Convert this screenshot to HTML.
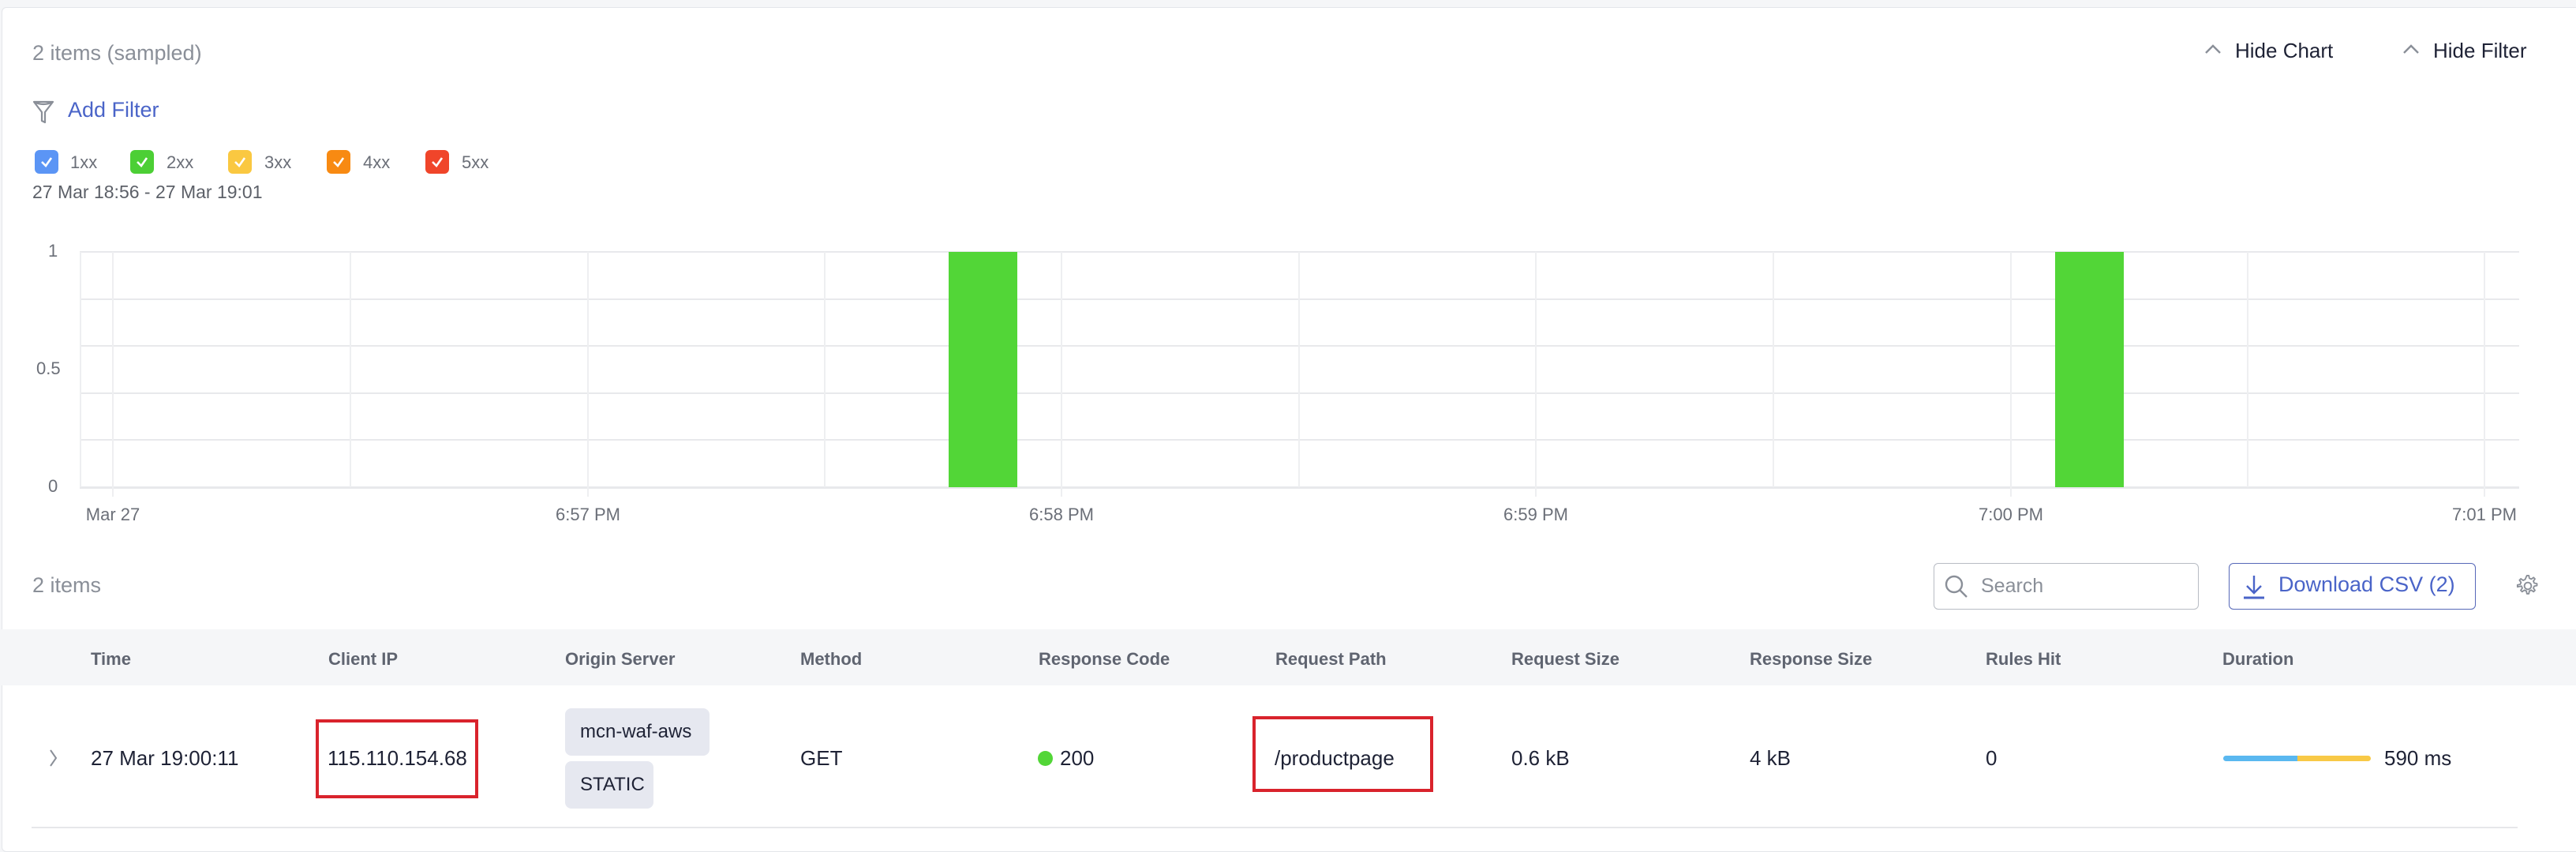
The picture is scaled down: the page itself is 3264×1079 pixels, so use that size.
<!DOCTYPE html>
<html><head><meta charset="utf-8"><style>
*{margin:0;padding:0;box-sizing:border-box}
body{width:3264px;height:1066px;background:#f5f6f8;font-family:"Liberation Sans",sans-serif;position:relative;overflow:hidden}
.card{position:absolute;left:2px;top:9px;width:3270px;height:1070px;background:#fff;border:1px solid #e4e6ea;border-radius:6px}
.a{position:absolute;white-space:nowrap}
.g{color:#8a8f98}
.t{color:#1e2235;font-size:26px}
.h{color:#5f6470;font-size:22px;font-weight:bold;top:822px}
.cb{position:absolute;top:190px;width:30px;height:30px;border-radius:6px}
.cb svg{position:absolute;left:6px;top:7px}
.cl{position:absolute;top:193px;font-size:22px;color:#6b6f78}
.hl{position:absolute;left:101px;width:3091px;height:2px;background:#e8e9ec}
.vl{position:absolute;top:319px;height:310px;width:2px;background:#eeeff1}
.xl{position:absolute;top:639px;font-size:22px;color:#6b6f78;transform:translateX(-50%)}
.tag{position:absolute;left:716px;background:#e6e8f0;border-radius:8px;font-size:24px;color:#1e2235;padding-left:19px;line-height:60px}
.red{position:absolute;border:4px solid #d9232c}
</style></head><body>
<div class="card"></div>
<div class="a g" style="left:41px;top:52px;font-size:27px">2 items (sampled)</div>
<svg class="a" style="left:2793px;top:55px" width="22" height="14"><path d="M2 12 L11 3 L20 12" stroke="#8a8f98" stroke-width="2.4" fill="none"/></svg>
<div class="a t" style="left:2832px;top:49px">Hide Chart</div>
<svg class="a" style="left:3044px;top:55px" width="22" height="14"><path d="M2 12 L11 3 L20 12" stroke="#8a8f98" stroke-width="2.4" fill="none"/></svg>
<div class="a t" style="left:3083px;top:49px">Hide Filter</div>
<svg class="a" style="left:40px;top:126px" width="32" height="32"><path d="M3 3 H27 L17 16 V29 L13 27 V16 Z M3 3 Q15 9 27 3" stroke="#8a8f98" stroke-width="2.2" fill="none" stroke-linejoin="round"/></svg>
<div class="a" style="left:86px;top:124px;font-size:27px;color:#4a64c8">Add Filter</div>
<div class="cb" style="left:44px;background:#5b95f5"><svg width="18" height="16"><path d="M3 8 L8 13 L15 3" stroke="#fff" stroke-width="2.6" fill="none"/></svg></div><div class="cl" style="left:89px">1xx</div>
<div class="cb" style="left:165px;background:#4ccf35"><svg width="18" height="16"><path d="M3 8 L8 13 L15 3" stroke="#fff" stroke-width="2.6" fill="none"/></svg></div><div class="cl" style="left:211px">2xx</div>
<div class="cb" style="left:289px;background:#fac841"><svg width="18" height="16"><path d="M3 8 L8 13 L15 3" stroke="#fff" stroke-width="2.6" fill="none"/></svg></div><div class="cl" style="left:335px">3xx</div>
<div class="cb" style="left:414px;background:#f88a12"><svg width="18" height="16"><path d="M3 8 L8 13 L15 3" stroke="#fff" stroke-width="2.6" fill="none"/></svg></div><div class="cl" style="left:460px">4xx</div>
<div class="cb" style="left:539px;background:#f0452a"><svg width="18" height="16"><path d="M3 8 L8 13 L15 3" stroke="#fff" stroke-width="2.6" fill="none"/></svg></div><div class="cl" style="left:585px">5xx</div>
<div class="a" style="left:41px;top:230px;font-size:23px;color:#5c6068">27 Mar 18:56 - 27 Mar 19:01</div>

<div class="a" style="left:61px;top:305px;font-size:22px;color:#6b6f78">1</div>
<div class="a" style="left:46px;top:454px;font-size:22px;color:#6b6f78">0.5</div>
<div class="a" style="left:61px;top:603px;font-size:22px;color:#6b6f78">0</div>
<div class="hl" style="top:318px"></div><div class="hl" style="top:378px"></div><div class="hl" style="top:437px"></div><div class="hl" style="top:497px"></div><div class="hl" style="top:556px"></div><div class="hl" style="top:616px;height:3px"></div>
<div class="vl" style="left:101px;height:298px"></div>
<div class="vl" style="left:142px"></div><div class="vl" style="left:443px;height:298px"></div><div class="vl" style="left:744px"></div><div class="vl" style="left:1044px;height:298px"></div><div class="vl" style="left:1344px"></div><div class="vl" style="left:1645px;height:298px"></div><div class="vl" style="left:1945px"></div><div class="vl" style="left:2246px;height:298px"></div><div class="vl" style="left:2547px"></div><div class="vl" style="left:2847px;height:298px"></div><div class="vl" style="left:3147px"></div>
<div class="a" style="left:1202px;top:319px;width:87px;height:298px;background:#52d637"></div>
<div class="a" style="left:2604px;top:319px;width:87px;height:298px;background:#52d637"></div>
<div class="xl" style="left:143px">Mar 27</div><div class="xl" style="left:745px">6:57 PM</div><div class="xl" style="left:1345px">6:58 PM</div><div class="xl" style="left:1946px">6:59 PM</div><div class="xl" style="left:2548px">7:00 PM</div><div class="xl" style="left:3148px">7:01 PM</div>

<div class="a g" style="left:41px;top:726px;font-size:27px">2 items</div>
<div class="a" style="left:2450px;top:713px;width:336px;height:59px;border:1.5px solid #b8bcc4;border-radius:6px"></div>
<svg class="a" style="left:2463px;top:727px" width="32" height="32"><circle cx="13" cy="13" r="10" stroke="#8a8f98" stroke-width="2.4" fill="none"/><path d="M20 20 L29 29" stroke="#8a8f98" stroke-width="2.4"/></svg>
<div class="a" style="left:2510px;top:728px;font-size:25px;color:#8a8f98">Search</div>
<div class="a" style="left:2824px;top:713px;width:313px;height:59px;border:1.5px solid #5668b8;border-radius:6px"></div>
<svg class="a" style="left:2841px;top:727px" width="30" height="32"><path d="M15 2 V24 M6 15 L15 24 L24 15" stroke="#4a64c8" stroke-width="2.4" fill="none"/><path d="M2 30 H28" stroke="#4a64c8" stroke-width="3"/></svg>
<div class="a" style="left:2887px;top:725px;font-size:27px;color:#4a64c8">Download CSV (2)</div>
<svg class="a" style="left:3188px;top:727px" width="30" height="30" viewBox="0 0 24 24"><path d="M11 1.5h2l.5 2.7 2 .9 2.3-1.6 1.4 1.4-1.6 2.3.9 2 2.7.5v2l-2.7.5-.9 2 1.6 2.3-1.4 1.4-2.3-1.6-2 .9-.5 2.7h-2l-.5-2.7-2-.9-2.3 1.6-1.4-1.4 1.6-2.3-.9-2L1.5 13v-2l2.7-.5.9-2-1.6-2.3 1.4-1.4 2.3 1.6 2-.9z" stroke="#8a8f98" stroke-width="1.5" fill="none" stroke-linejoin="round"/><circle cx="12" cy="12" r="3.5" stroke="#8a8f98" stroke-width="1.5" fill="none"/></svg>

<div class="a" style="left:2px;top:797px;width:3262px;height:71px;background:#f5f6f8"></div>
<div class="a h" style="left:115px">Time</div>
<div class="a h" style="left:416px">Client IP</div>
<div class="a h" style="left:716px">Origin Server</div>
<div class="a h" style="left:1014px">Method</div>
<div class="a h" style="left:1316px">Response Code</div>
<div class="a h" style="left:1616px">Request Path</div>
<div class="a h" style="left:1915px">Request Size</div>
<div class="a h" style="left:2217px">Response Size</div>
<div class="a h" style="left:2516px">Rules Hit</div>
<div class="a h" style="left:2816px">Duration</div>

<svg class="a" style="left:62px;top:948px" width="12" height="24"><path d="M2 2 L9 12 L2 22" stroke="#8a8f98" stroke-width="2" fill="none"/></svg>
<div class="a t" style="left:115px;top:945px">27 Mar 19:00:11</div>
<div class="red" style="left:400px;top:911px;width:206px;height:100px"></div>
<div class="a t" style="left:415px;top:945px">115.110.154.68</div>
<div class="tag" style="top:897px;width:183px">mcn-waf-aws</div>
<div class="tag" style="top:964px;width:112px">STATIC</div>
<div class="a t" style="left:1014px;top:945px">GET</div>
<div class="a" style="left:1315px;top:951px;width:19px;height:19px;border-radius:50%;background:#52d637"></div>
<div class="a t" style="left:1343px;top:945px">200</div>
<div class="red" style="left:1587px;top:907px;width:229px;height:96px"></div>
<div class="a t" style="left:1615px;top:945px">/productpage</div>
<div class="a t" style="left:1915px;top:945px">0.6 kB</div>
<div class="a t" style="left:2217px;top:945px">4 kB</div>
<div class="a t" style="left:2516px;top:945px">0</div>
<div class="a" style="left:2817px;top:957px;width:94px;height:7px;background:#5ab8f0;border-radius:4px 0 0 4px"></div>
<div class="a" style="left:2911px;top:957px;width:93px;height:7px;background:#f8c946;border-radius:0 4px 4px 0"></div>
<div class="a t" style="left:3021px;top:945px">590 ms</div>
<div class="a" style="left:40px;top:1047px;width:3150px;height:2px;background:#e6e7ea"></div>
</body></html>
